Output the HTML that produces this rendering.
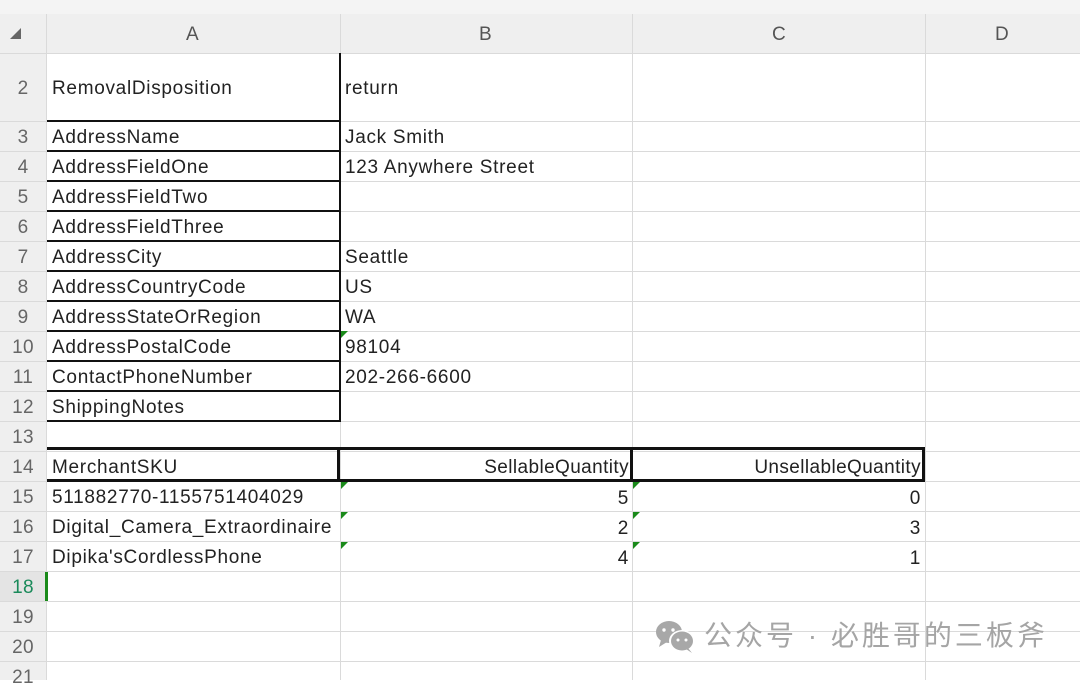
<!DOCTYPE html>
<html><head><meta charset="utf-8"><style>
body{margin:0;width:1080px;height:680px;overflow:hidden;background:#fff;font-family:"Liberation Sans","Noto Sans CJK SC",sans-serif;position:relative}
div{position:absolute;box-sizing:border-box}
.hl{height:1px;background:#dadada;left:0;width:1080px}
.vl{width:1px;background:#dadada;top:14px;height:666px}
.rn{left:0;width:46px;text-align:center;color:#666;font-size:19px;line-height:30px;height:30px;letter-spacing:0.3px;margin-top:2px}
.t{font-size:19px;line-height:30px;height:30px;color:#222;white-space:nowrap;letter-spacing:0.7px;margin-top:2px}
.bk{background:#111}
.tri{width:0;height:0;border-top:7px solid #1a8a1a;border-right:7px solid transparent}
</style></head><body>
<div style="left:0;top:0;width:1080px;height:53px;background:#efefef"></div>
<div style="left:0;top:0;width:1080px;height:14px;background:#f4f4f4"></div>
<div style="left:0;top:53px;width:46px;height:627px;background:#efefef"></div>
<div style="left:10px;top:28px;width:0;height:0;border-bottom:11px solid #666;border-left:11px solid transparent"></div>
<div class="t" style="left:186px;top:18px;color:#555">A</div>
<div class="t" style="left:479px;top:18px;color:#555">B</div>
<div class="t" style="left:772px;top:18px;color:#555">C</div>
<div class="t" style="left:995px;top:18px;color:#555">D</div>
<div class="vl" style="left:46px"></div>
<div class="vl" style="left:340px"></div>
<div class="vl" style="left:632px"></div>
<div class="vl" style="left:925px"></div>
<div class="hl" style="top:53px"></div>
<div class="hl" style="top:121px"></div><div class="hl" style="top:151px"></div><div class="hl" style="top:181px"></div><div class="hl" style="top:211px"></div><div class="hl" style="top:241px"></div><div class="hl" style="top:271px"></div><div class="hl" style="top:301px"></div><div class="hl" style="top:331px"></div><div class="hl" style="top:361px"></div><div class="hl" style="top:391px"></div><div class="hl" style="top:421px"></div><div class="hl" style="top:451px"></div><div class="hl" style="top:481px"></div><div class="hl" style="top:511px"></div><div class="hl" style="top:541px"></div><div class="hl" style="top:571px"></div><div class="hl" style="top:601px"></div><div class="hl" style="top:631px"></div><div class="hl" style="top:661px"></div>
<div class="bk" style="left:339px;top:53px;width:2px;height:369px"></div>
<div class="bk" style="left:47px;top:120px;width:293px;height:2px"></div>
<div class="bk" style="left:47px;top:150px;width:293px;height:2px"></div>
<div class="bk" style="left:47px;top:180px;width:293px;height:2px"></div>
<div class="bk" style="left:47px;top:210px;width:293px;height:2px"></div>
<div class="bk" style="left:47px;top:240px;width:293px;height:2px"></div>
<div class="bk" style="left:47px;top:270px;width:293px;height:2px"></div>
<div class="bk" style="left:47px;top:300px;width:293px;height:2px"></div>
<div class="bk" style="left:47px;top:330px;width:293px;height:2px"></div>
<div class="bk" style="left:47px;top:360px;width:293px;height:2px"></div>
<div class="bk" style="left:47px;top:390px;width:293px;height:2px"></div>
<div class="bk" style="left:47px;top:420px;width:293px;height:2px"></div>
<div class="bk" style="left:47px;top:447px;width:878px;height:3px"></div>
<div class="bk" style="left:47px;top:479px;width:878px;height:3px"></div>
<div class="bk" style="left:337px;top:447px;width:3px;height:35px"></div>
<div class="bk" style="left:630px;top:447px;width:3px;height:35px"></div>
<div class="bk" style="left:922px;top:447px;width:3px;height:35px"></div>
<div class="tri" style="left:341px;top:331px"></div>
<div class="tri" style="left:341px;top:482px"></div><div class="tri" style="left:633px;top:482px"></div>
<div class="tri" style="left:341px;top:512px"></div><div class="tri" style="left:633px;top:512px"></div>
<div class="tri" style="left:341px;top:542px"></div><div class="tri" style="left:633px;top:542px"></div>
<div class="rn" style="top:72px">2</div>
<div class="rn" style="top:121px">3</div><div class="rn" style="top:151px">4</div><div class="rn" style="top:181px">5</div><div class="rn" style="top:211px">6</div><div class="rn" style="top:241px">7</div><div class="rn" style="top:271px">8</div><div class="rn" style="top:301px">9</div><div class="rn" style="top:331px">10</div><div class="rn" style="top:361px">11</div><div class="rn" style="top:391px">12</div><div class="rn" style="top:421px">13</div><div class="rn" style="top:451px">14</div><div class="rn" style="top:481px">15</div><div class="rn" style="top:511px">16</div><div class="rn" style="top:541px">17</div>
<div style="left:0;top:572px;width:46px;height:29px;background:#e4e4e4"></div>
<div class="rn" style="top:571px;color:#1a8a5a">18</div>
<div style="left:45px;top:572px;width:3px;height:29px;background:#1a8a1a"></div>
<div class="rn" style="top:601px">19</div><div class="rn" style="top:631px">20</div><div class="rn" style="top:661px">21</div>
<div class="t" style="left:52px;top:72px">RemovalDisposition</div>
<div class="t" style="left:52px;top:121px">AddressName</div>
<div class="t" style="left:52px;top:151px">AddressFieldOne</div>
<div class="t" style="left:52px;top:181px">AddressFieldTwo</div>
<div class="t" style="left:52px;top:211px">AddressFieldThree</div>
<div class="t" style="left:52px;top:241px">AddressCity</div>
<div class="t" style="left:52px;top:271px">AddressCountryCode</div>
<div class="t" style="left:52px;top:301px">AddressStateOrRegion</div>
<div class="t" style="left:52px;top:331px">AddressPostalCode</div>
<div class="t" style="left:52px;top:361px">ContactPhoneNumber</div>
<div class="t" style="left:52px;top:391px">ShippingNotes</div>
<div class="t" style="left:52px;top:451px">MerchantSKU</div>
<div class="t" style="left:52px;top:481px">511882770-1155751404029</div>
<div class="t" style="left:52px;top:511px">Digital_Camera_Extraordinaire</div>
<div class="t" style="left:52px;top:541px">Dipika'sCordlessPhone</div>
<div class="t" style="left:345px;top:72px">return</div>
<div class="t" style="left:345px;top:121px">Jack Smith</div>
<div class="t" style="left:345px;top:151px">123 Anywhere Street</div>
<div class="t" style="left:345px;top:241px">Seattle</div>
<div class="t" style="left:345px;top:271px">US</div>
<div class="t" style="left:345px;top:301px">WA</div>
<div class="t" style="left:345px;top:331px">98104</div>
<div class="t" style="left:345px;top:361px">202-266-6600</div>
<div class="t" style="left:340px;width:289px;text-align:right;top:451px;letter-spacing:0.4px">SellableQuantity</div>
<div class="t" style="left:340px;width:289px;text-align:right;top:482px">5</div>
<div class="t" style="left:340px;width:289px;text-align:right;top:512px">2</div>
<div class="t" style="left:340px;width:289px;text-align:right;top:542px">4</div>
<div class="t" style="left:632px;width:289px;text-align:right;top:451px;letter-spacing:0.4px">UnsellableQuantity</div>
<div class="t" style="left:632px;width:289px;text-align:right;top:482px">0</div>
<div class="t" style="left:632px;width:289px;text-align:right;top:512px">3</div>
<div class="t" style="left:632px;width:289px;text-align:right;top:542px">1</div>
<svg style="position:absolute;left:655px;top:619px" width="42" height="36" viewBox="0 0 42 36">
<ellipse cx="14" cy="13" rx="13" ry="11" fill="#a8a8a8"/><path d="M6 21 L4 28 L12 23Z" fill="#a8a8a8"/>
<ellipse cx="27" cy="22" rx="13" ry="11" fill="#fff"/>
<ellipse cx="27" cy="22" rx="11" ry="9.5" fill="#a8a8a8"/><path d="M33 29 L37 34 L31 30Z" fill="#a8a8a8"/>
<circle cx="9" cy="11" r="1.7" fill="#fff"/><circle cx="18" cy="11" r="1.7" fill="#fff"/>
<circle cx="23" cy="21" r="1.5" fill="#fff"/><circle cx="31" cy="21" r="1.5" fill="#fff"/>
</svg>
<div style="left:704px;top:618px;font-size:28px;line-height:36px;color:#a5a5a5;white-space:nowrap;letter-spacing:3px">公众号 · 必胜哥的三板斧</div>
</body></html>
